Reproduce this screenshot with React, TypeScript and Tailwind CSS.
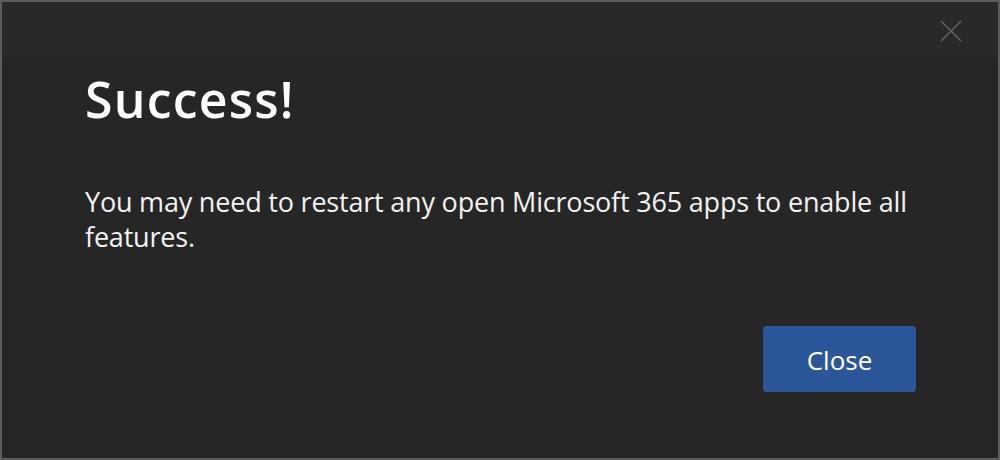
import React from "react";

export default function App() {
  return (
    <div
      className="w-[1000px] h-[460px] border-2 border-[#5c5c5c] bg-[#262626] flex flex-col"
      style={{ fontFamily: '"Segoe UI", "Open Sans", "Noto Sans", sans-serif' }}
    >
      <div className="h-[56px] bg-[#292929] flex justify-end items-start shrink-0">
        <button className="mt-[17px] mr-[35px] w-[24px] h-[24px] flex items-center justify-center">
          <svg width="22" height="22" viewBox="0 0 22 22">
            <path d="M1 1 L21 21 M21 1 L1 21" stroke="#616161" strokeWidth="1.6" fill="none" />
          </svg>
        </button>
      </div>
      <div className="flex-1 flex flex-col pl-[83px] pr-[80px]">
        <h1 className="text-[50px] leading-[60px] font-semibold text-white mt-[11px] tracking-[1.2px]">Success!</h1>
        <p className="text-[27px] leading-[35px] text-[#f2f2f2] mt-[55px] tracking-[-0.2px]">
          You may need to restart any open Microsoft 365 apps to enable all features.
        </p>
        <div className="flex justify-end mt-auto mb-[66px] pr-[2px]">
          <button className="w-[153px] h-[66px] rounded-[4px] bg-[#2b579a] text-white text-[26px] pt-[2px]">Close</button>
        </div>
      </div>
    </div>
  );
}
